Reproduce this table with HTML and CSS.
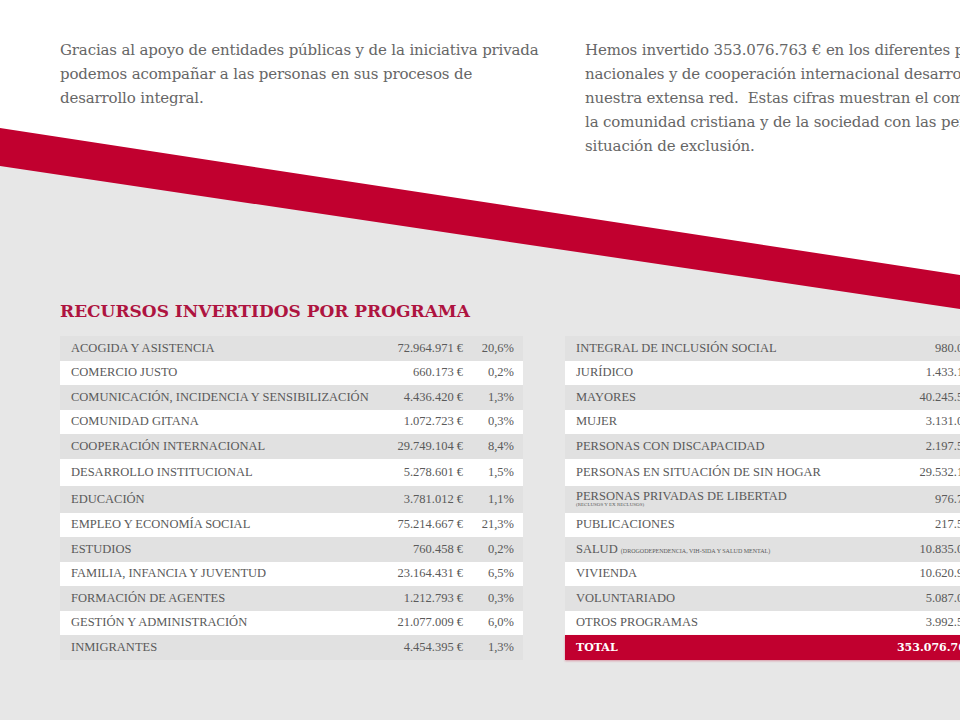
FILE: index.html
```html
<!DOCTYPE html>
<html lang="es">
<head>
<meta charset="utf-8">
<title>Recursos invertidos por programa</title>
<link rel="stylesheet" href="styles.css">
</head>
<body>
<div class="page">
  <svg class="bg" width="960" height="720" viewBox="0 0 960 720" aria-hidden="true">
    <rect x="0" y="0" width="960" height="720" fill="#ffffff"/>
    <polygon points="0,165 960,308 960,720 0,720" fill="#e7e7e7"/>
    <polygon points="0,128 960,275 960,309 0,166" fill="#c1002f"/>
  </svg>

  <div class="content">
    <div class="intro">
      <p class="intro-text left">Gracias al apoyo de entidades públicas y de la iniciativa privada<br>podemos acompañar a las personas en sus procesos de<br>desarrollo integral.</p>
      <p class="intro-text right">Hemos invertido 353.076.763 € en los diferentes programas<br>nacionales y de cooperación internacional desarrollados por<br>nuestra extensa red.&nbsp; Estas cifras muestran el compromiso de<br>la comunidad cristiana y de la sociedad con las personas en<br>situación de exclusión.</p>
    </div>

    <h2 class="title">RECURSOS INVERTIDOS POR PROGRAMA</h2>

    <div class="tables">
      <div class="table t-left">
        <div class="row"><span class="lbl">ACOGIDA Y ASISTENCIA</span><span class="amt">72.964.971 €</span><span class="pct">20,6%</span></div>
        <div class="row"><span class="lbl">COMERCIO JUSTO</span><span class="amt">660.173 €</span><span class="pct">0,2%</span></div>
        <div class="row"><span class="lbl">COMUNICACIÓN, INCIDENCIA Y SENSIBILIZACIÓN</span><span class="amt">4.436.420 €</span><span class="pct">1,3%</span></div>
        <div class="row"><span class="lbl">COMUNIDAD GITANA</span><span class="amt">1.072.723 €</span><span class="pct">0,3%</span></div>
        <div class="row"><span class="lbl">COOPERACIÓN INTERNACIONAL</span><span class="amt">29.749.104 €</span><span class="pct">8,4%</span></div>
        <div class="row tall"><span class="lbl">DESARROLLO INSTITUCIONAL</span><span class="amt">5.278.601 €</span><span class="pct">1,5%</span></div>
        <div class="row tall"><span class="lbl">EDUCACIÓN</span><span class="amt">3.781.012 €</span><span class="pct">1,1%</span></div>
        <div class="row"><span class="lbl">EMPLEO Y ECONOMÍA SOCIAL</span><span class="amt">75.214.667 €</span><span class="pct">21,3%</span></div>
        <div class="row"><span class="lbl">ESTUDIOS</span><span class="amt">760.458 €</span><span class="pct">0,2%</span></div>
        <div class="row"><span class="lbl">FAMILIA, INFANCIA Y JUVENTUD</span><span class="amt">23.164.431 €</span><span class="pct">6,5%</span></div>
        <div class="row"><span class="lbl">FORMACIÓN DE AGENTES</span><span class="amt">1.212.793 €</span><span class="pct">0,3%</span></div>
        <div class="row"><span class="lbl">GESTIÓN Y ADMINISTRACIÓN</span><span class="amt">21.077.009 €</span><span class="pct">6,0%</span></div>
        <div class="row"><span class="lbl">INMIGRANTES</span><span class="amt">4.454.395 €</span><span class="pct">1,3%</span></div>
      </div>

      <div class="table t-right">
        <div class="row"><span class="lbl">INTEGRAL DE INCLUSIÓN SOCIAL</span><span class="amt">980.071 €</span><span class="pct">0,3%</span></div>
        <div class="row"><span class="lbl">JURÍDICO</span><span class="amt">1.433.182 €</span><span class="pct">0,4%</span></div>
        <div class="row"><span class="lbl">MAYORES</span><span class="amt">40.245.530 €</span><span class="pct">11,4%</span></div>
        <div class="row"><span class="lbl">MUJER</span><span class="amt">3.131.064 €</span><span class="pct">0,9%</span></div>
        <div class="row"><span class="lbl">PERSONAS CON DISCAPACIDAD</span><span class="amt">2.197.541 €</span><span class="pct">0,6%</span></div>
        <div class="row tall"><span class="lbl">PERSONAS EN SITUACIÓN DE SIN HOGAR</span><span class="amt">29.532.178 €</span><span class="pct">8,4%</span></div>
        <div class="row tall"><span class="lbl two">PERSONAS PRIVADAS DE LIBERTAD<small>(RECLUSOS Y EX RECLUSOS)</small></span><span class="amt">976.722 €</span><span class="pct">0,3%</span></div>
        <div class="row"><span class="lbl">PUBLICACIONES</span><span class="amt">217.544 €</span><span class="pct">0,1%</span></div>
        <div class="row"><span class="lbl">SALUD <small class="inline">(DROGODEPENDENCIA, VIH-SIDA Y SALUD MENTAL)</small></span><span class="amt">10.835.046 €</span><span class="pct">3,1%</span></div>
        <div class="row"><span class="lbl">VIVIENDA</span><span class="amt">10.620.915 €</span><span class="pct">3,0%</span></div>
        <div class="row"><span class="lbl">VOLUNTARIADO</span><span class="amt">5.087.033 €</span><span class="pct">1,4%</span></div>
        <div class="row"><span class="lbl">OTROS PROGRAMAS</span><span class="amt">3.992.510 €</span><span class="pct">1,1%</span></div>
        <div class="row total"><span class="lbl">TOTAL</span><span class="amt">353.076.763 €</span><span class="pct">100%</span></div>
      </div>
    </div>
  </div>
</div>
</body>
</html>
```

FILE: styles.css
```css
html, body {
  margin: 0;
  padding: 0;
}

body {
  width: 960px;
  height: 720px;
  overflow: hidden;
  background: #e7e7e7;
}

.page {
  position: relative;
  width: 960px;
  height: 720px;
  overflow: hidden;
}

.bg {
  position: absolute;
  left: 0;
  top: 0;
  z-index: 0;
}

.content {
  position: relative;
  z-index: 1;
  padding: 38px 0 0 60px;
}

.intro {
  display: flex;
  gap: 40px;
}

.intro-text {
  margin: 0;
  font-family: "DejaVu Serif", "Liberation Serif", serif;
  font-size: 15px;
  line-height: 24px;
  color: #666666;
  letter-spacing: -0.15px;
  white-space: nowrap;
}

.intro-text.left {
  width: 485px;
  flex: none;
}

.intro-text.right {
  width: 480px;
  flex: none;
}

.title {
  margin: 143px 0 0 0;
  font-family: "DejaVu Serif", serif;
  font-weight: bold;
  font-size: 17px;
  line-height: 20px;
  color: #ae1440;
}

.tables {
  display: flex;
  gap: 42px;
  margin-top: 15px;
}

.table {
  display: flex;
  flex-direction: column;
  flex: none;
}

.t-left {
  width: 463px;
}

.t-right {
  width: 480px;
}

.row {
  display: grid;
  grid-template-columns: 1fr auto 51px;
  align-items: center;
  height: 24.5px;
  padding: 0 9px 0 11px;
  font-family: "Liberation Serif", "DejaVu Serif", serif;
  font-size: 12.5px;
  color: #5a5a5a;
  white-space: nowrap;
}

.row.tall {
  height: 27px;
}

.row:nth-child(odd) {
  background: #e1e1e1;
}

.row:nth-child(even) {
  background: #ffffff;
}

.lbl.two {
  display: flex;
  flex-direction: column;
  line-height: 11px;
}

.lbl small {
  font-size: 5px;
  line-height: 6px;
}

.lbl small.inline {
  font-size: 6px;
}

.amt, .pct {
  text-align: right;
}

.row.total {
  background: #c1002f;
  color: #ffffff;
  font-family: "DejaVu Serif", serif;
  font-weight: bold;
  font-size: 11px;
  box-shadow: 0 1px 2px rgba(193, 0, 47, 0.35);
}
```
